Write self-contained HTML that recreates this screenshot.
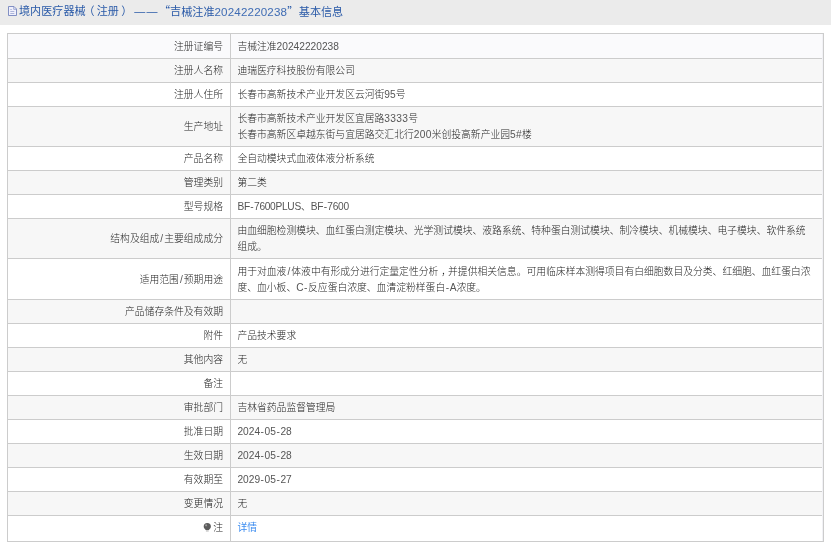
<!DOCTYPE html>
<html lang="zh-CN"><head><meta charset="utf-8"><title>基本信息</title>
<style>
html,body{margin:0;padding:0;background:#fff;}
body{width:831px;height:544px;overflow:hidden;position:relative;font-family:"Liberation Sans","Noto Sans CJK SC",sans-serif;font-size:9.8px;color:#242424;font-weight:300;}
.title{position:absolute;left:0;top:0;width:831px;height:25px;background:#ebebeb;color:#2a5aa8;font-weight:400;font-size:11.1px;line-height:20px;white-space:nowrap;}
.title span{position:absolute;left:18.5px;top:0px;}
.title b{font-weight:inherit;display:inline-block;}
.pl{position:relative;left:-2px;}
.pr{position:relative;left:2.3px;}
.ds{font-weight:400 !important;font-family:"Liberation Sans",sans-serif;font-size:11px;letter-spacing:1.3px;margin-left:4.3px;margin-right:0.1px;}
.q1,.q2{font-family:"Noto Sans CJK SC",sans-serif;}
.dg{font-size:11.6px;letter-spacing:0.16px;color:#3f6cb4;}
.q2{margin-right:0.5px;}
.title svg{position:absolute;left:8px;top:5.7px;}
.tb{background:#f1f1f5;position:absolute;left:7px;top:33px;width:817px;height:509px;box-sizing:border-box;border:1px solid #ccc;}
.r{position:absolute;left:0;width:814px;border-bottom:1px solid #ccc;box-sizing:content-box;}
.l{position:absolute;left:0;top:0;bottom:0;width:222px;border-right:1px solid #ccc;white-space:nowrap;line-height:16.2px;text-align:right;}
.l span{display:block;padding-right:7px;position:relative;}
.v{position:absolute;left:223px;top:0;bottom:0;right:0;white-space:nowrap;line-height:16.2px;}
.v span{padding-left:7px;display:block;position:relative;}

.l,.v{will-change:transform;}
.l span{transform:translate(0px,-0.25px) rotate(0.001deg);}
.v span{transform:translate(-0.6px,-0.25px) rotate(0.001deg);}
.title em{position:absolute;left:0;top:0;width:400px;height:25px;will-change:transform;font-style:normal;}
.title span{transform:translate(0px,0.5px) rotate(0.001deg);}
a{color:#3b8cf0;text-decoration:none;font-weight:400;}
i{font-style:normal;font-weight:400;font-size:10.2px;letter-spacing:0;color:#555;}
u{text-decoration:none;padding:0 0.55px;}
i.w{letter-spacing:-0.3px;}
i.x{letter-spacing:0.3px;}
.c{font-weight:inherit;position:relative;left:3px;}
u.s{padding:0 1.05px;}
</style></head><body>
<div class="title"><svg width="9" height="10" viewBox="0 0 9 10"><path d="M0.5 0.5H6L8.5 3V9.5H0.5Z" fill="#f0f0fc" stroke="#7585bd" stroke-width="0.9"/><path d="M5.7 0.5V3.3H8.5" fill="none" stroke="#8b99c9" stroke-width="0.8"/><path d="M2.3 3.5H3.8M2.3 5.5H6.3M2.3 7.5H6.3" stroke="#9aa6d0" stroke-width="0.8"/></svg><em><span>境内医疗器械<b class="pl">（</b>注册<b class="pr">）</b><b class="ds">——</b><b class="q1">“</b>吉械注准<b class="dg">20242220238</b><b class="q2">”</b>基本信息</span></em></div>
<div class="tb">
<div class="r" style="top:0px;height:24px;background:#fafafc;"><div class="l"><span style="top:4.80px">注册证编号</span></div><div class="v"><span style="top:4.80px">吉械注准<i>20242220238</i></span></div></div>
<div class="r" style="top:25px;height:23px;background:#f7f7f7;"><div class="l"><span style="top:4.30px">注册人名称</span></div><div class="v"><span style="top:4.30px">迪瑞医疗科技股份有限公司</span></div></div>
<div class="r" style="top:49px;height:23px;background:#ffffff;"><div class="l"><span style="top:4.30px">注册人住所</span></div><div class="v"><span style="top:4.30px">长春市高新技术产业开发区云河街<i>95</i>号</span></div></div>
<div class="r" style="top:73px;height:39px;background:#f7f7f7;"><div class="l"><span style="top:12.30px">生产地址</span></div><div class="v"><span style="top:4.20px">长春市高新技术产业开发区宜居路<i class="x">3333</i>号<br>长春市高新区卓越东街与宜居路交汇北行<i class="x">200</i>米创投高新产业园<i class="x">5#</i>楼</span></div></div>
<div class="r" style="top:113px;height:23px;background:#ffffff;"><div class="l"><span style="top:4.30px">产品名称</span></div><div class="v"><span style="top:4.30px">全自动模块式血液体液分析系统</span></div></div>
<div class="r" style="top:137px;height:23px;background:#f7f7f7;"><div class="l"><span style="top:4.30px">管理类别</span></div><div class="v"><span style="top:4.30px">第二类</span></div></div>
<div class="r" style="top:161px;height:23px;background:#ffffff;"><div class="l"><span style="top:4.30px">型号规格</span></div><div class="v"><span style="top:4.30px"><i class="w">BF<u>-</u>7600PLUS</i>、<i class="w">BF<u>-</u>7600</i></span></div></div>
<div class="r" style="top:185px;height:39px;background:#f7f7f7;"><div class="l"><span style="top:12.30px">结构及组成<i><u class="s">/</u></i>主要组成成分</span></div><div class="v"><span style="top:4.20px">由血细胞检测模块、血红蛋白测定模块、光学测试模块、液路系统、特种蛋白测试模块、制冷模块、机械模块、电子模块、软件系统<br>组成。</span></div></div>
<div class="r" style="top:225px;height:40px;background:#ffffff;"><div class="l"><span style="top:12.80px">适用范围<i><u class="s">/</u></i>预期用途</span></div><div class="v"><span style="top:4.70px">用于对血液<i><u class="s">/</u></i>体液中有形成分进行定量定性分析<b class="c">，</b>并提供相关信息。可用临床样本测得项目有白细胞数目及分类、红细胞、血红蛋白浓<br>度、血小板、<i>C<u>-</u></i>反应蛋白浓度、血清淀粉样蛋白<i><u>-</u>A</i>浓度。</span></div></div>
<div class="r" style="top:266px;height:23px;background:#f7f7f7;"><div class="l"><span style="top:4.30px">产品储存条件及有效期</span></div><div class="v"><span style="top:4.30px"></span></div></div>
<div class="r" style="top:290px;height:23px;background:#ffffff;"><div class="l"><span style="top:4.30px">附件</span></div><div class="v"><span style="top:4.30px">产品技术要求</span></div></div>
<div class="r" style="top:314px;height:23px;background:#f7f7f7;"><div class="l"><span style="top:4.30px">其他内容</span></div><div class="v"><span style="top:4.30px">无</span></div></div>
<div class="r" style="top:338px;height:23px;background:#ffffff;"><div class="l"><span style="top:4.30px">备注</span></div><div class="v"><span style="top:4.30px"></span></div></div>
<div class="r" style="top:362px;height:23px;background:#f7f7f7;"><div class="l"><span style="top:4.30px">审批部门</span></div><div class="v"><span style="top:4.30px">吉林省药品监督管理局</span></div></div>
<div class="r" style="top:386px;height:23px;background:#ffffff;"><div class="l"><span style="top:4.30px">批准日期</span></div><div class="v"><span style="top:4.30px"><i>2024<u>-</u>05<u>-</u>28</i></span></div></div>
<div class="r" style="top:410px;height:23px;background:#f7f7f7;"><div class="l"><span style="top:4.30px">生效日期</span></div><div class="v"><span style="top:4.30px"><i>2024<u>-</u>05<u>-</u>28</i></span></div></div>
<div class="r" style="top:434px;height:23px;background:#ffffff;"><div class="l"><span style="top:4.30px">有效期至</span></div><div class="v"><span style="top:4.30px"><i>2029<u>-</u>05<u>-</u>27</i></span></div></div>
<div class="r" style="top:458px;height:23px;background:#f7f7f7;"><div class="l"><span style="top:4.30px">变更情况</span></div><div class="v"><span style="top:4.30px">无</span></div></div>
<div class="r" style="top:482px;height:25px;background:#ffffff;border-bottom:0;"><div class="l"><span style="top:3.80px"><svg class="bulb" width="9" height="10" viewBox="0 0 9 10" style="position:absolute;right:17.7px;top:3.4px"><rect x="2.9" y="6.6" width="2.8" height="2.3" fill="#cfcfcf"/><path d="M4.3 0.3a3.6 3.5 0 0 1 3.6 3.5c0 1.7-1.3 2.6-2 3.4h-3.2c-0.7-0.8-2-1.7-2-3.4a3.6 3.5 0 0 1 3.6-3.5z" fill="#5c5c5c"/><circle cx="3.1" cy="2.6" r="1.1" fill="#9a9a9a"/></svg>注</span></div><div class="v"><span style="top:4.10px"><a>详情</a></span></div></div>
</div>
</body></html>
